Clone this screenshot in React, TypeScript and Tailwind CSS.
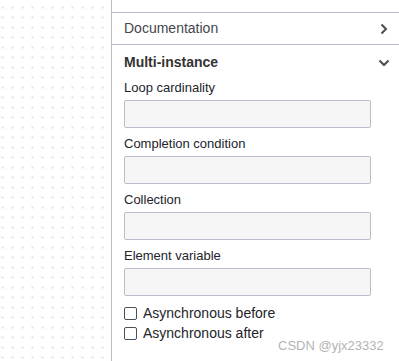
import React from 'react';

const fields = ['Loop cardinality', 'Completion condition', 'Collection', 'Element variable'];
const checks = ['Asynchronous before', 'Asynchronous after'];

const ChevronRight = () => (
  <svg width="12" height="12" viewBox="0 0 12 12" className="text-[#4a4d55]">
    <path d="M3.5 1.5 L8 6 L3.5 10.5" fill="none" stroke="currentColor" strokeWidth="2" />
  </svg>
);

const ChevronDown = () => (
  <svg width="12" height="12" viewBox="0 0 12 12" className="text-[#4a4d55]">
    <path d="M1.5 3.5 L6 8 L10.5 3.5" fill="none" stroke="currentColor" strokeWidth="2" />
  </svg>
);

const App: React.FC = () => {
  return (
    <div className="relative flex h-[361px] w-[399px] overflow-hidden bg-white font-['Liberation_Sans',Arial,sans-serif] text-[#22242a]">
      {/* canvas with dot grid */}
      <div className="w-[111px] shrink-0 bg-white bg-[radial-gradient(circle,#d2d2d8_0.6px,transparent_0.9px)] bg-[size:10px_10px] bg-[position:-2.5px_2.5px]" />

      <div className="flex flex-1 flex-col border-l border-[#b9bcc6]">
        <div className="h-[13px] border-b border-[#b9bcc6]" />

        <div className="flex h-[32px] items-center justify-between border-b border-[#b9bcc6] pl-3 pr-[9px]">
          <span className="text-[14px] text-[#45474d]">Documentation</span>
          <ChevronRight />
        </div>

        <div className="flex h-[35px] items-center justify-between pl-3 pr-[9px]">
          <span className="text-[14px] font-semibold text-[#333]">Multi-instance</span>
          <ChevronDown />
        </div>

        <div className="flex flex-col gap-2 pl-3 pr-[28px]">
          {fields.map(label => (
            <div key={label} className="flex flex-col gap-1">
              <label className="h-4 text-[13px] leading-4">{label}</label>
              <input className="h-[28px] w-full rounded-[2px] border border-[#babdc7] bg-[#f6f6f7]" />
            </div>
          ))}
        </div>

        <div className="mt-[7px] flex flex-col pl-3">
          {checks.map(label => (
            <div key={label} className="flex h-5 items-center gap-[6px]">
              <span className="h-[13px] w-[13px] rounded-[2px] border border-[#4c4f55] bg-white" />
              <span className="text-[14px]">{label}</span>
            </div>
          ))}
        </div>
      </div>

      <span className="absolute left-[278px] top-[336px] text-[13px] text-[#b3b3b3]">CSDN @yjx23332</span>
    </div>
  );
};

export default App;
